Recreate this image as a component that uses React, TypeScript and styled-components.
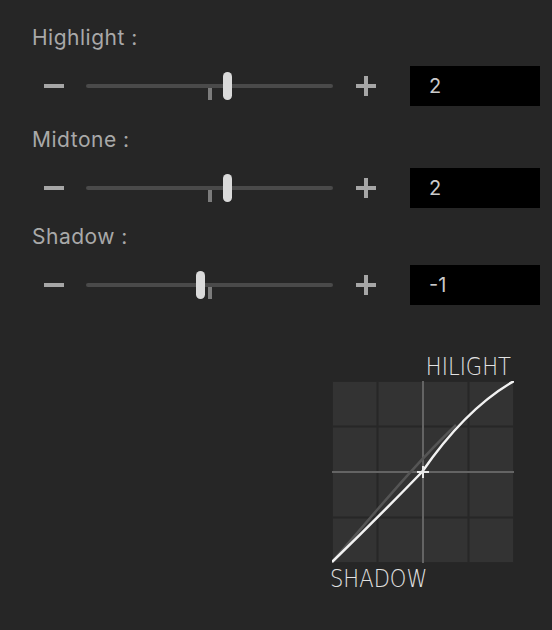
import { FC } from 'react';
import styled, { createGlobalStyle } from 'styled-components';

const GlobalStyle = createGlobalStyle`
  html, body {
    margin: 0;
    padding: 0;
    background: #262626;
  }
  body {
    font-family: Inter, "Liberation Sans", sans-serif;
  }
`;

const SPanel = styled.div`
  width: 552px;
  height: 630px;
  box-sizing: border-box;
  padding: 26px 0 0 32px;
  background: #262626;
  overflow: hidden;
`;

const SGroup = styled.section<{ $gap: number }>`
  margin-top: ${(p) => p.$gap}px;
`;

const SLabel = styled.div`
  font-size: 21px;
  line-height: 24px;
  color: #a9a9a9;
  letter-spacing: 0.5px;
`;

const SRow = styled.div`
  display: flex;
  align-items: center;
  height: 40px;
  margin-top: 16px;
  padding-left: 12px;
`;

const SStepButton = styled.button`
  position: relative;
  width: 20px;
  height: 20px;
  padding: 0;
  border: 0;
  background: transparent;
  flex: none;

  &::before,
  &::after {
    content: '';
    position: absolute;
    background: #a6a6a6;
  }
  &::before {
    left: 0;
    right: 0;
    top: 8px;
    height: 4px;
  }
`;

const SPlus = styled(SStepButton)`
  &::after {
    top: 0;
    bottom: 0;
    left: 8px;
    width: 4px;
  }
`;

const STrack = styled.div`
  position: relative;
  width: 247px;
  height: 4px;
  margin: 0 23px 0 22px;
  border-radius: 2px;
  background: #4a4a4a;
`;

const STick = styled.span`
  position: absolute;
  left: 50%;
  top: 4px;
  width: 4px;
  height: 12px;
  margin-left: -2px;
  background: #7c7c7c;
`;

const SThumb = styled.span`
  position: absolute;
  top: -12px;
  width: 9px;
  height: 28px;
  margin-left: -4.5px;
  border-radius: 5px;
  background: #dadada;
`;

const SValue = styled.div`
  width: 130px;
  height: 40px;
  margin-left: 34px;
  box-sizing: border-box;
  padding-left: 19px;
  background: #000;
  color: #cacaca;
  font-size: 20px;
  line-height: 40px;
`;

const SChartWrap = styled.div`
  display: flex;
  justify-content: flex-end;
  padding-right: 36px;
  margin-top: 50px;
`;

const SChart = styled.div`
  width: 186px;
  display: flex;
  flex-direction: column;
`;

const SCurveLabel = styled.span<{ $align: 'start' | 'end' }>`
  align-self: flex-${(p) => p.$align};
  display: inline-block;
  margin: ${(p) => (p.$align === 'end' ? '0 5px 0 0' : '4px 0 0 0')};
  font-family: "DejaVu Sans", "Liberation Sans", sans-serif;
  font-weight: 200;
  font-size: 24.5px;
  line-height: 24px;
  color: #e2e2e2;
  transform: scaleX(0.86);
  transform-origin: ${(p) => (p.$align === 'start' ? 'left' : 'right')} center;
`;

const SGraph = styled.svg`
  display: block;
  margin: 2px 0 0 2px;
`;

const MIN = -14;
const MAX = 14;

const settings = [
  { label: 'Highlight :', value: 2, gap: 0 },
  { label: 'Midtone :', value: 2, gap: 22 },
  { label: 'Shadow :', value: -1, gap: 17 },
];

const Slider: FC<{ label: string; value: number; gap: number }> = ({ label, value, gap }) => {
  const pct = ((value - MIN) / (MAX - MIN)) * 100;
  return (
    <SGroup $gap={gap}>
      <SLabel>{label}</SLabel>
      <SRow>
        <SStepButton aria-label="decrease" />
        <STrack>
          <STick />
          <SThumb style={{ left: `${pct}%` }} />
        </STrack>
        <SPlus aria-label="increase" />
        <SValue>{value}</SValue>
      </SRow>
    </SGroup>
  );
};

const Curve: FC = () => {
  const cells = [0, 1, 2, 3];
  const step = 182 / 4;
  return (
    <SGraph width="182" height="182" viewBox="0 0 182 182">
      <rect x="0" y="0" width="182" height="182" fill="#272727" />
      {cells.map((r) =>
        cells.map((c) => (
          <rect
            key={`${r}-${c}`}
            x={c * step + 1}
            y={r * step + 1}
            width={step - 2}
            height={step - 2}
            fill="#333333"
          />
        ))
      )}
      <line x1="91" y1="0" x2="91" y2="182" stroke="#7a7a7a" strokeWidth="1.5" />
      <line x1="0" y1="91" x2="182" y2="91" stroke="#7a7a7a" strokeWidth="1.5" />
      <path
        d="M0,181 C38,138 78,88 124,44"
        fill="none"
        stroke="#555555"
        strokeWidth="2.5"
      />
      <path
        d="M0,181 C30,152 60,122 90,91 C110,62 140,24 182,0"
        fill="none"
        stroke="#f2f2f2"
        strokeWidth="2.5"
      />
      <path d="M85,91 H97 M91,85 V97" stroke="#e8e8e8" strokeWidth="2" />
    </SGraph>
  );
};

const App: FC = () => {
  return (
    <>
      <GlobalStyle />
      <SPanel>
        {settings.map((s) => (
          <Slider key={s.label} label={s.label} value={s.value} gap={s.gap} />
        ))}
        <SChartWrap>
          <SChart>
            <SCurveLabel $align="end">HILIGHT</SCurveLabel>
            <Curve />
            <SCurveLabel $align="start">SHADOW</SCurveLabel>
          </SChart>
        </SChartWrap>
      </SPanel>
    </>
  );
};

export default App;
